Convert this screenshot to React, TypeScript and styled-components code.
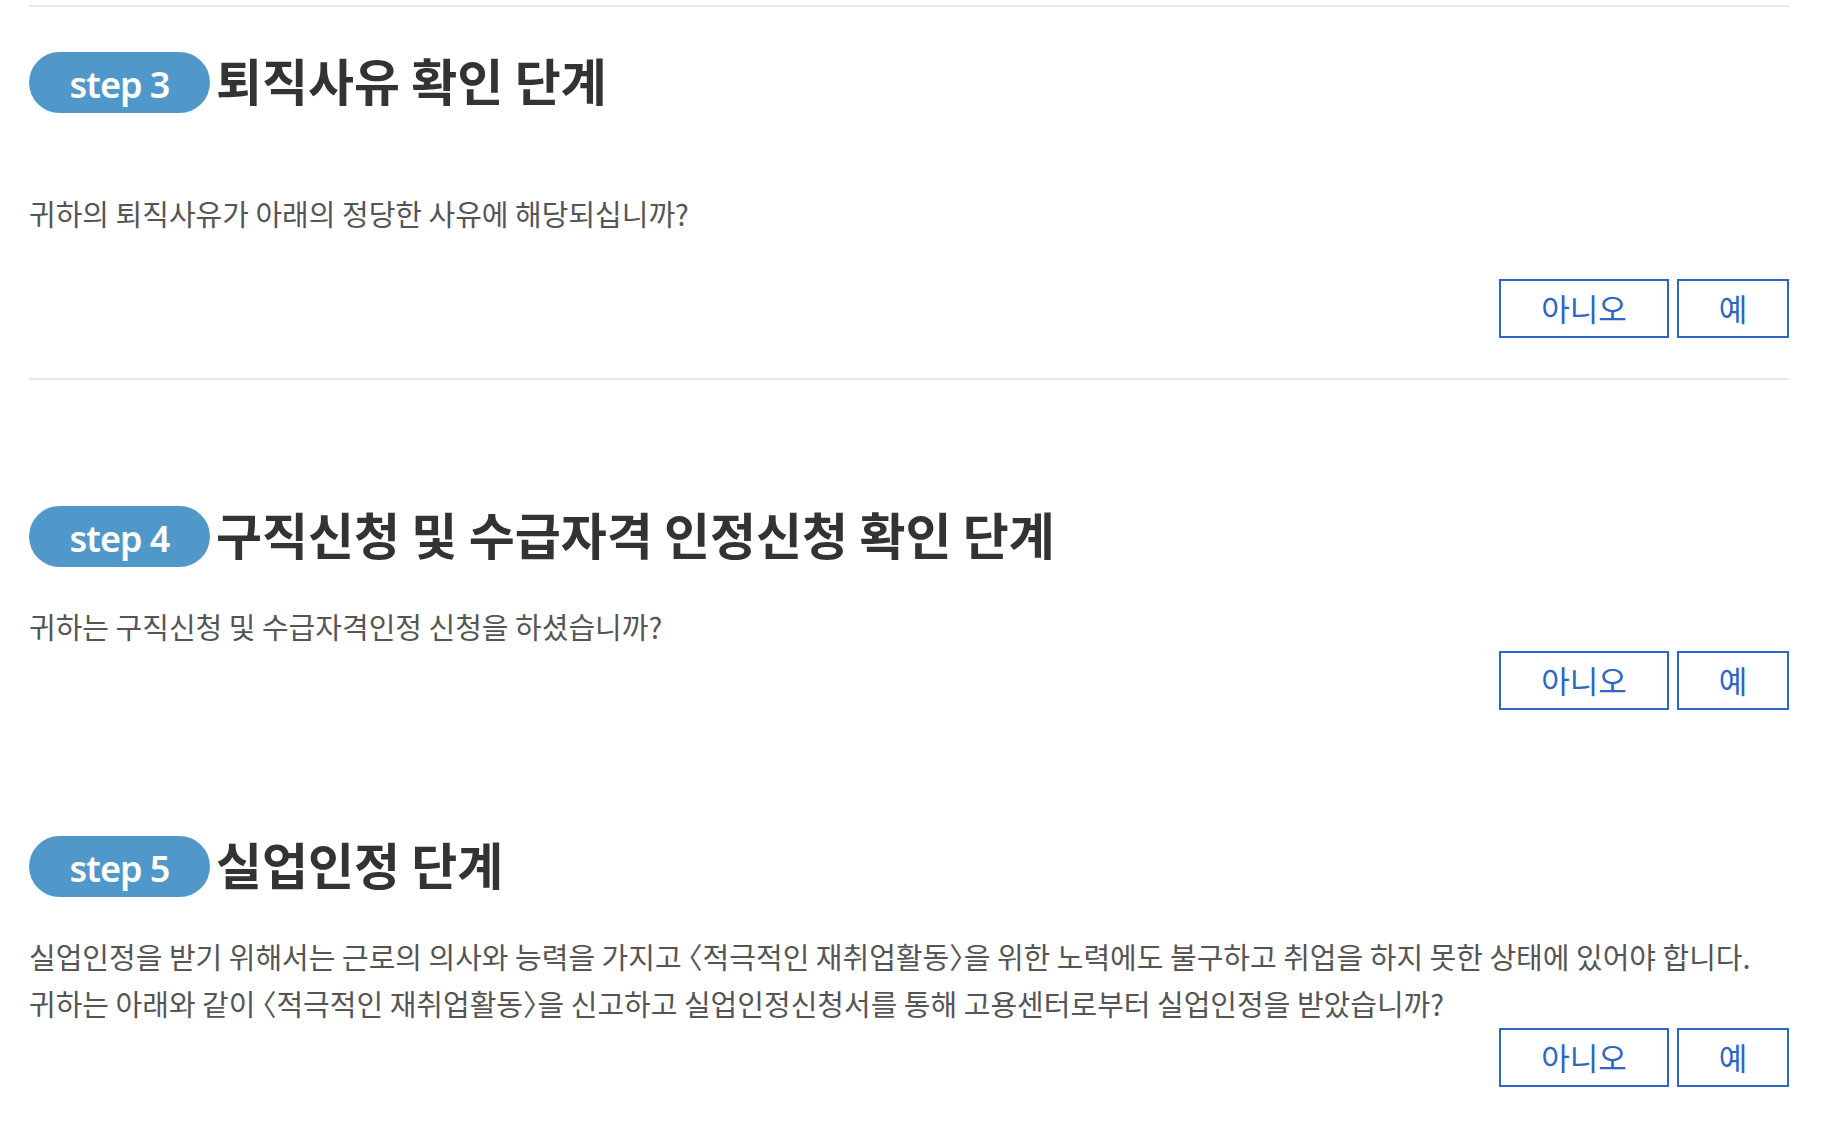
import React from "react";
import styled, { createGlobalStyle } from "styled-components";

const GlobalStyle = createGlobalStyle`
  * { box-sizing: border-box; }
  body {
    margin: 0;
    background: #ffffff;
    font-family: "Noto Sans CJK KR", "Noto Sans", sans-serif;
  }
`;

type StepData = {
  step: number;
  title: string;
  lines: string[];
};

const steps: StepData[] = [
  {
    step: 3,
    title: "퇴직사유 확인 단계",
    lines: ["귀하의 퇴직사유가 아래의 정당한 사유에 해당되십니까?"],
  },
  {
    step: 4,
    title: "구직신청 및 수급자격 인정신청 확인 단계",
    lines: ["귀하는 구직신청 및 수급자격인정 신청을 하셨습니까?"],
  },
  {
    step: 5,
    title: "실업인정 단계",
    lines: [
      "실업인정을 받기 위해서는 근로의 의사와 능력을 가지고 〈적극적인 재취업활동〉을 위한 노력에도 불구하고 취업을 하지 못한 상태에 있어야 합니다.",
      "귀하는 아래와 같이 〈적극적인 재취업활동〉을 신고하고 실업인정신청서를 통해 고용센터로부터 실업인정을 받았습니까?",
    ],
  },
];

const App: React.FC = () => {
  return (
    <>
      <GlobalStyle />
      <Page>
        {steps.map((s, i) => (
          <Section key={s.step} first={i === 0}>
            <Heading>
              <StepPill>step {s.step}</StepPill>
              <Title>{s.title}</Title>
            </Heading>
            <Question first={i === 0}>
              {s.lines.map((line) => (
                <p key={line}>{line}</p>
              ))}
            </Question>
            <Answers first={i === 0}>
              <AnswerButton wide>아니오</AnswerButton>
              <AnswerButton>예</AnswerButton>
            </Answers>
          </Section>
        ))}
      </Page>
    </>
  );
};

const Page = styled.div`
  padding: 5px 33px 48px 29px;
`;

const Section = styled.section<{ first?: boolean }>`
  padding-top: ${({ first }) => (first ? "45px" : "126px")};
  padding-bottom: ${({ first }) => (first ? "40px" : "0")};
  border-top: ${({ first }) => (first ? "2px solid #e6e6e6" : "none")};
  border-bottom: ${({ first }) => (first ? "2px solid #e6e6e6" : "none")};
`;

const Heading = styled.div`
  display: flex;
  align-items: center;
  gap: 6px;
  height: 61px;
`;

const StepPill = styled.div`
  display: flex;
  align-items: center;
  justify-content: center;
  width: 181px;
  height: 61px;
  border-radius: 31px;
  background: #4f98c9;
  color: #ffffff;
  font-family: "Noto Sans", "Noto Sans CJK KR", sans-serif;
  font-size: 36px;
  font-weight: 600;
  letter-spacing: -1px;
  padding-top: 3px;
`;

const Title = styled.h2`
  margin: 0;
  color: #333333;
  font-size: 50px;
  font-weight: 700;
  line-height: 61px;
  padding-bottom: 6px;
`;

const Question = styled.div<{ first?: boolean }>`
  margin-top: ${({ first }) => (first ? "77px" : "36px")};
  color: #555555;
  font-size: 29px;
  line-height: 47px;
  font-feature-settings: "halt";

  p {
    margin: 0;
  }
`;

const Answers = styled.div<{ first?: boolean }>`
  display: flex;
  justify-content: flex-end;
  gap: 8px;
  margin-top: ${({ first }) => (first ? "42px" : "1px")};
`;

const AnswerButton = styled.button<{ wide?: boolean }>`
  width: ${({ wide }) => (wide ? "170px" : "112px")};
  height: 59px;
  border: 2px solid #2d66c3;
  background: #ffffff;
  color: #2d66c3;
  font-family: "Noto Sans CJK KR", sans-serif;
  font-size: 31px;
  padding: 0 0 3px;
  cursor: pointer;
`;

export default App;
